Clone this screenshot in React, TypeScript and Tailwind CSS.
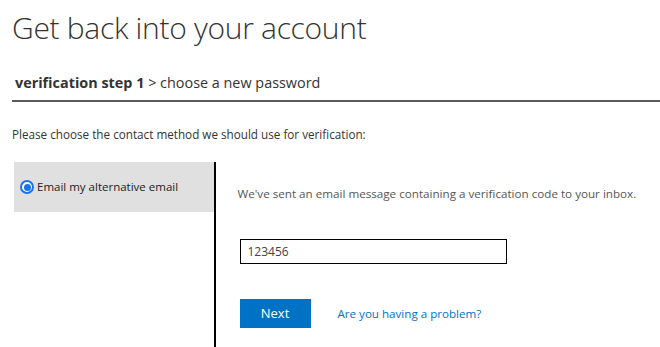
import React from 'react';

const font = { fontFamily: '"Open Sans", "Segoe UI", sans-serif' };

export default function App() {
  return (
    <div className="w-[660px] h-[347px] overflow-hidden bg-white pl-3 text-[#333]" style={font}>
      <h1 className="pt-[8px] text-[30px] leading-[40px] font-light tracking-[-0.3px] text-[#333]">
        Get back into your account
      </h1>

      <div className="mt-[25px] border-b-2 border-[#5b5b5b] pb-[7px] pl-[3px] text-[14.4px] leading-[20px] text-[#333]">
        <span className="font-bold">verification step 1</span>
        <span> &gt; choose a new password</span>
      </div>

      <p className="mt-[24px] text-[11.7px] leading-[16px] text-[#333]">
        Please choose the contact method we should use for verification:
      </p>

      <div className="mt-[20px] flex">
        <div className="ml-[2px] w-[200px] shrink-0">
          <label className="flex h-[50px] items-center gap-[3px] bg-[#e0e0e0] pl-[6px] text-[11.5px] text-[#222]">
            <span className="flex h-[14px] w-[14px] items-center justify-center rounded-full border-2 border-[#1a73e8] bg-white">
              <span className="h-[7px] w-[7px] rounded-full bg-[#1a73e8]" />
            </span>
            Email my alternative email
          </label>
        </div>

        <div className="w-[1.5px] h-[190px] bg-black shrink-0" />

        <div className="pl-[22px] pt-[24px]">
          <p className="text-[11.65px] leading-[16px] text-[#555]">
            We&apos;ve sent an email message containing a verification code to your inbox.
          </p>

          <input
            defaultValue="123456"
            className="mt-[37px] ml-[2px] block h-[25px] w-[267px] border border-black px-[7px] text-[12px] text-[#444] outline-none"
            style={font}
          />

          <div className="mt-[35px] ml-[2px] flex items-center gap-[27px]">
            <button className="h-[29px] w-[71px] bg-[#0072c6] text-[13px] text-white" style={font}>
              Next
            </button>
            <a href="#" className="text-[11.6px] text-[#0072c6]">
              Are you having a problem?
            </a>
          </div>
        </div>
      </div>
    </div>
  );
}
